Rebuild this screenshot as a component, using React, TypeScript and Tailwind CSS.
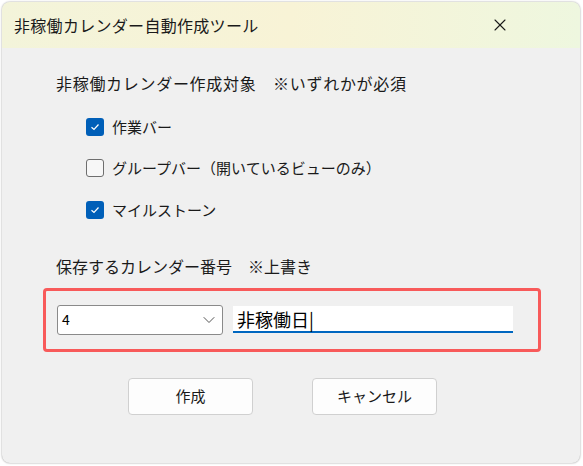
import { ChevronDown, X } from "lucide-react";

const font = {
  fontFamily: '"Noto Sans CJK JP", "Noto Sans", sans-serif',
};

interface CheckProps {
  checked: boolean;
  label: string;
}

const CheckRow = ({ checked, label }: CheckProps) => (
  <div className="flex items-center h-[41.5px]">
    {checked ? (
      <span className="w-[18px] h-[18px] rounded-[3px] bg-[#005fb8] flex items-center justify-center">
        <svg width="10" height="10" viewBox="0 0 10 10" fill="none">
          <path d="M1.5 5.2 L4 7.5 L8.5 2.5" stroke="white" strokeWidth="1.2" />
        </svg>
      </span>
    ) : (
      <span className="w-[18px] h-[18px] rounded-[3px] border border-[#6e6e6e] bg-[#f7f7f7]" />
    )}
    <span className="ml-[8px] text-[15px] text-[#1a1a1a]">{label}</span>
  </div>
);

export default function App() {
  return (
    <div className="w-[583px] h-[466px] bg-white p-[2px] pb-[3px]" style={font}>
      <div className="w-[578px] h-[461px] rounded-[8px] overflow-hidden bg-[#f0f0f0] shadow-[0_0_2px_rgba(0,0,0,0.45)] flex flex-col">
        <div className="h-[46px] shrink-0 flex items-center justify-between pl-[12px] pr-[70px] bg-gradient-to-r from-[#f3f4da] via-[#f8f3d6] to-[#eef7df]">
          <span className="text-[16px] text-[#1a1a1a] tracking-[0.3px]">非稼働カレンダー自動作成ツール</span>
          <X size={20} strokeWidth={1.3} className="text-[#1a1a1a]" />
        </div>
        <div className="flex flex-col pl-[54px] pt-[22px]">
          <div className="text-[16px] text-[#1a1a1a] h-[26px] flex items-center tracking-[0.7px]">
            非稼働カレンダー作成対象　※いずれかが必須
          </div>
          <div className="flex flex-col pl-[30px] mt-[10px]">
            <CheckRow checked label="作業バー" />
            <CheckRow checked={false} label="グループバー（開いているビューのみ）" />
            <CheckRow checked label="マイルストーン" />
          </div>
          <div className="text-[16px] text-[#1a1a1a] h-[26px] flex items-center mt-[22px]">
            保存するカレンダー番号　※上書き
          </div>
        </div>
        <div className="ml-[41px] mt-[9px] w-[498px] h-[64px] shrink-0 border-[3px] border-[#f85a5a] rounded-[4px] flex items-center pl-[11px]">
          <div className="w-[166px] h-[30px] bg-white border border-[#8a8a8a] rounded-[3px] flex items-center justify-between pl-[4px] pr-[3px]">
            <span className="text-[14px] text-black">4</span>
            <ChevronDown size={20} strokeWidth={1.2} className="text-[#555]" />
          </div>
          <div className="ml-[10px] w-[280px] h-[27px] bg-white border-b-2 border-[#0067c0] flex items-center pl-[4px]">
            <span className="text-[18px] text-black leading-none">非稼働日|</span>
          </div>
        </div>
        <div className="flex pl-[126px] mt-[26px] gap-[59px]">
          <button className="w-[125px] h-[37px] bg-[#fdfdfd] border border-[#d0d0d0] rounded-[4px] text-[15px] text-[#1a1a1a]">
            作成
          </button>
          <button className="w-[125px] h-[37px] bg-[#fdfdfd] border border-[#d0d0d0] rounded-[4px] text-[15px] text-[#1a1a1a]">
            キャンセル
          </button>
        </div>
      </div>
    </div>
  );
}
